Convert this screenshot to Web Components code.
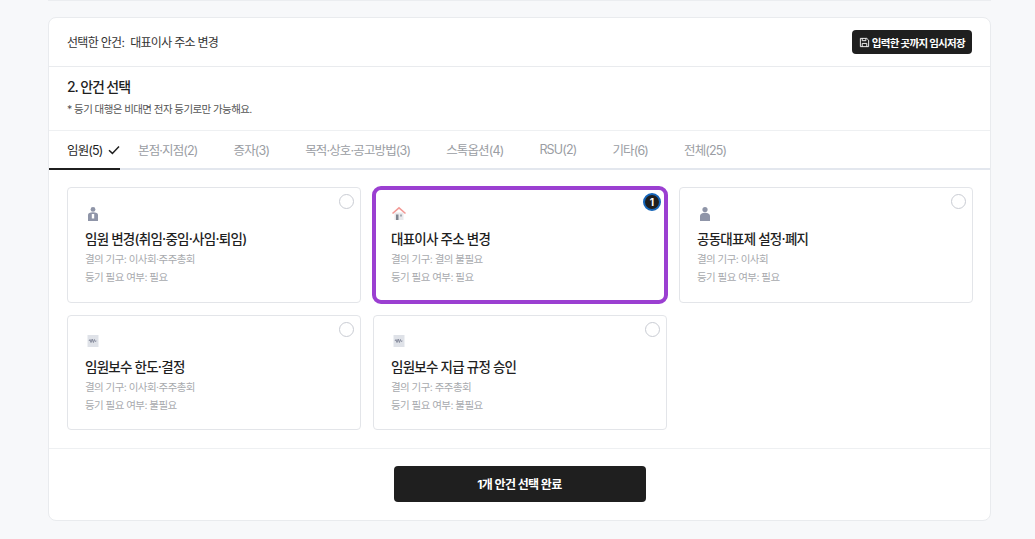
<!DOCTYPE html>
<html lang="ko">
<head>
<meta charset="utf-8">
<title>안건 선택</title>
<style>
html, body { margin: 0; background: #f7f8fa; }
body { font-family: Inter, "Noto Sans CJK KR", sans-serif; color: #1f1f1f; height: 539px; overflow: hidden; }
</style>
</head>
<body>
<agenda-page>
  <agenda-tab slot="tabs" active check>임원(5)</agenda-tab>
  <agenda-tab slot="tabs">본점·지점(2)</agenda-tab>
  <agenda-tab slot="tabs">증자(3)</agenda-tab>
  <agenda-tab slot="tabs">목적·상호·공고방법(3)</agenda-tab>
  <agenda-tab slot="tabs">스톡옵션(4)</agenda-tab>
  <agenda-tab slot="tabs">RSU(2)</agenda-tab>
  <agenda-tab slot="tabs">기타(6)</agenda-tab>
  <agenda-tab slot="tabs">전체(25)</agenda-tab>

  <agenda-card slot="cards" icon="suit" body="이사회·주주총회" need="필요">임원 변경(취임·중임·사임·퇴임)</agenda-card>
  <agenda-card slot="cards" icon="house" body="결의 불필요" need="필요" selected>대표이사 주소 변경</agenda-card>
  <agenda-card slot="cards" icon="person" body="이사회" need="필요">공동대표제 설정·폐지</agenda-card>
  <agenda-card slot="cards" icon="pay" body="이사회·주주총회" need="불필요">임원보수 한도·결정</agenda-card>
  <agenda-card slot="cards" icon="pay" body="주주총회" need="불필요">임원보수 지급 규정 승인</agenda-card>
</agenda-page>

<script>
const pageTemplate = document.createElement('template')
pageTemplate.innerHTML = `
<style>
:host { display: block; padding: 0 44px 0 48px; }
.prev { height: 1px; background: #ebedf0; margin-bottom: 16px; }
.card {
  background: #fff;
  border: 1px solid #e9ebee;
  border-radius: 8px;
  height: 504px;
  box-sizing: border-box;
  display: flex;
  flex-direction: column;
}
.selected {
  height: 49px;
  box-sizing: border-box;
  flex: none;
  padding: 0 18px;
  display: flex;
  align-items: center;
  justify-content: space-between;
  border-bottom: 1px solid #e9ebee;
  font-size: 12px;
  letter-spacing: -0.7px;
  color: #333;
}
.selected > span:first-child { margin-bottom: 2px; }
.selected b { font-weight: 400; margin-right: 6px; }
.save {
  height: 24px;
  box-sizing: border-box;
  padding: 0 7px;
  display: flex;
  align-items: center;
  gap: 2px;
  background: #1f1f1f;
  color: #fff;
  border-radius: 4px;
  font-size: 10.5px;
  font-weight: 700;
  letter-spacing: -0.7px;
}
.save svg { display: block; }
.head { height: 63px; box-sizing: border-box; flex: none; padding: 10px 18px 0; }
.head h2 { margin: 0; font-size: 14px; line-height: 20px; font-weight: 500; letter-spacing: -1.1px; color: #1f1f1f; }
.head p { margin: 5px 0 0; font-size: 10.5px; line-height: 16px; letter-spacing: -0.58px; color: #555; }
.tabs {
  height: 40px;
  box-sizing: border-box;
  flex: none;
  display: flex;
  border-top: 1px solid #eef0f2;
  border-bottom: 2px solid #e3e7ee;
}
.grid {
  flex: none;
  padding: 17px 18px 18px;
  display: grid;
  grid-template-columns: repeat(3, 294px);
  grid-template-rows: 116px 115px;
  gap: 12px;
  border-bottom: 1px solid #eef0f2;
}
.foot { flex: 1; display: flex; justify-content: center; align-items: flex-start; padding-top: 17px; }
.done {
  width: 252px;
  height: 36px;
  background: #1f1f1f;
  color: #fff;
  border: 0;
  border-radius: 4px;
  font: 700 12px Inter, "Noto Sans CJK KR", sans-serif;
  letter-spacing: -0.6px;
  padding: 0 0 2px;
}
</style>
<div class="prev"></div>
<section class="card">
  <div class="selected">
    <span><b>선택한 안건:</b>대표이사 주소 변경</span>
    <span class="save">
      <svg width="11" height="11" viewBox="0 0 12 12" fill="none" stroke="#fff" stroke-width="1">
        <path d="M1.5 1.5h7l2 2v7h-9z"/>
        <path d="M3.5 10.5V7h5v3.5M3.5 1.5v2.5h4V1.5"/>
      </svg>
      입력한 곳까지 임시저장
    </span>
  </div>
  <div class="head">
    <h2>2. 안건 선택</h2>
    <p>* 등기 대행은 비대면 전자 등기로만 가능해요.</p>
  </div>
  <nav class="tabs"><slot name="tabs"></slot></nav>
  <div class="grid"><slot name="cards"></slot></div>
  <div class="foot"><button class="done">1개 안건 선택 완료</button></div>
</section>
`

customElements.define('agenda-page',
  class extends HTMLElement {
    constructor () {
      super()
      this.attachShadow({ mode: 'open' })
        .appendChild(pageTemplate.content.cloneNode(true))
    }
  }
)

const tabTemplate = document.createElement('template')
tabTemplate.innerHTML = `
<style>
:host {
  display: flex;
  align-items: center;
  gap: 6px;
  height: 37px;
  box-sizing: border-box;
  padding: 0 18px;
  font-size: 12.5px;
  letter-spacing: -0.85px;
  color: #9a9da3;
  white-space: nowrap;
  position: relative;
}
:host([active]) { color: #1f1f1f; padding-right: 0; width: 71px; }
:host([active])::after {
  content: '';
  position: absolute;
  left: 0;
  right: 0;
  bottom: -2px;
  height: 2px;
  background: #1f1f1f;
}
svg { display: none; }
:host([check]) svg { display: block; flex: none; }
</style>
<slot></slot>
<svg width="12" height="10" viewBox="0 0 12 10" fill="none" stroke="#1f1f1f" stroke-width="1.5">
  <path d="M1 5.2l3.4 3.2L11 1.4"/>
</svg>
`

customElements.define('agenda-tab',
  class extends HTMLElement {
    constructor () {
      super()
      this.attachShadow({ mode: 'open' })
        .appendChild(tabTemplate.content.cloneNode(true))
    }
  }
)

// small pictograms, one per kind of agenda
const icons = {
  suit: `<circle cx="8" cy="4.400" r="2.400" fill="#8f95a8"/>
    <path d="M3 16V10c0-1.800 1.800-2.800 5-2.800s5 1 5 2.800v6z" fill="#8f95a8"/>
    <path d="M6.800 9h2.400v4.500H6.800z" fill="#fff"/>`,
  person: `<circle cx="8" cy="4.600" r="2.600" fill="#8f95a8"/>
    <path d="M3 16v-5c0-2 1.800-3.300 5-3.300s5 1.300 5 3.300v5z" fill="#8f95a8"/>`,
  house: `<path d="M3.500 7.500h9V15h-9z" fill="#e9e9ec"/>
    <path d="M1.500 8.500L8 2.800l6.500 5.700" fill="none" stroke="#f29a96" stroke-width="1.600"/>
    <path d="M5 9.500h2.500V15H5z" fill="#7f8590"/>
    <path d="M9 9.500h2V11.500H9z" fill="#a5a9b2"/>`,
  pay: `<path d="M2.500 2h11v12h-11z" fill="#dfe2e8"/>
    <path d="M4 8l1-1.500 1 3 1.200-3.500 1.200 3.500 1-3 1 2 1-.5" fill="none" stroke="#7f8596" stroke-width=".9"/>`
}

const cardTemplate = document.createElement('template')
cardTemplate.innerHTML = `
<style>
:host {
  display: block;
  position: relative;
  box-sizing: border-box;
  background: #fff;
  border: 1px solid #e3e5e9;
  border-radius: 4px;
  padding: 17px 17px 0;
}
:host([selected]) {
  outline: 4px solid #9b3fd1;
  outline-offset: -3px;
  border-radius: 8px;
}
.icon { display: block; width: 16px; height: 16px; margin-bottom: 8px; }
h3 { margin: 0 0 2px; font-size: 13.5px; line-height: 20px; font-weight: 500; color: #1f1f1f; letter-spacing: -0.75px; }
p { margin: 0; font-size: 10.5px; line-height: 18px; letter-spacing: -0.55px; color: #a8aaae; }
.radio {
  position: absolute;
  top: 6px;
  right: 6px;
  width: 15px;
  height: 15px;
  box-sizing: border-box;
  border: 1px solid #c9ccd3;
  border-radius: 50%;
  background: #fff;
}
:host([selected]) .radio {
  top: 5px;
  right: 5px;
  width: 18px;
  height: 18px;
  border: 2px solid #1565b8;
  background: #1f1f1f;
  color: #fff;
  font-size: 10px;
  font-weight: 700;
  line-height: 14px;
  text-align: center;
}
</style>
<svg class="icon" viewBox="0 0 16 16"></svg>
<h3><slot></slot></h3>
<p class="body"></p>
<p class="need"></p>
<span class="radio"></span>
`

customElements.define('agenda-card',
  class extends HTMLElement {
    constructor () {
      super()
      this.attachShadow({ mode: 'open' })
        .appendChild(cardTemplate.content.cloneNode(true))
    }

    connectedCallback () {
      const root = this.shadowRoot
      root.querySelector('.icon').innerHTML = icons[this.getAttribute('icon')]
      root.querySelector('.body').textContent = '결의 기구: ' + this.getAttribute('body')
      root.querySelector('.need').textContent = '등기 필요 여부: ' + this.getAttribute('need')
      if (this.hasAttribute('selected')) root.querySelector('.radio').textContent = '1'
    }
  }
)
</script>
</body>
</html>
